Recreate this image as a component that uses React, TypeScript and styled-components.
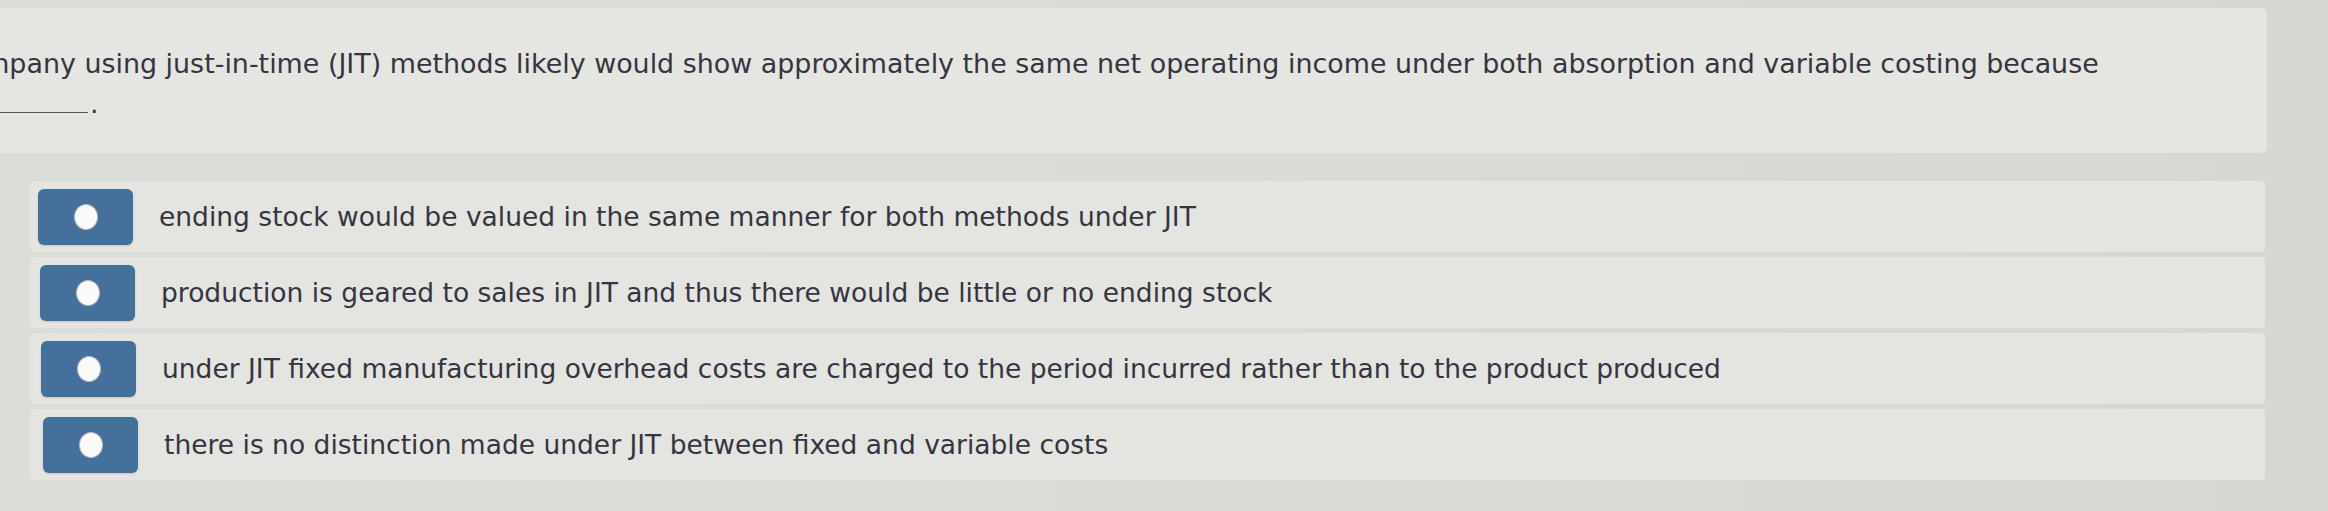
import React, { FC } from "react";
import styled, { createGlobalStyle } from "styled-components";

const GlobalStyle = createGlobalStyle`
  html, body {
    margin: 0;
    padding: 0;
    background: #d9d9d6;
  }
  body {
    font-family: "DejaVu Sans", Verdana, sans-serif;
    color: #353541;
  }
`;

const Page = styled.div`
  width: 2328px;
  height: 511px;
  overflow: hidden;
  padding-top: 8px;
  box-sizing: border-box;
  background: linear-gradient(90deg, #dcdcd9 0%, #dadad7 60%, #d6d6d3 100%);
`;

const QuestionPanel = styled.div`
  width: 2267px;
  height: 145px;
  background: #e5e5e2;
  border-radius: 0 6px 6px 0;
  box-sizing: border-box;
  padding-top: 36px;
  overflow: hidden;
`;

const QuestionText = styled.p`
  margin: 0 0 0 -75px;
  font-size: 26.9px;
  line-height: 40px;
`;

const Blank = styled.span`
  display: inline-block;
  width: 163px;
  border-bottom: 1.5px solid #555;
  vertical-align: baseline;
  margin-right: 2px;
`;

const OptionList = styled.div`
  display: flex;
  flex-direction: column;
  gap: 5px;
  margin: 28px 0 0 30px;
  width: 2235px;
`;

interface ShiftProps {
  shift: number;
}

const OptionRow = styled.div<ShiftProps>`
  display: flex;
  align-items: center;
  height: 71px;
  background: #e4e4e1;
  border-radius: 4px;
  padding-left: ${({ shift }) => 8 + shift}px;
  box-sizing: border-box;
`;

const RadioButton = styled.div`
  width: 95px;
  height: 56px;
  flex: none;
  border-radius: 6px;
  background: #44709b;
  display: flex;
  align-items: center;
  justify-content: center;
  box-shadow: 0 1px 2px rgba(0, 0, 0, 0.15);
`;

const Dot = styled.div`
  width: 22px;
  height: 24px;
  border-radius: 50%;
  background: #fafafa;
  border: 1.5px solid #b5b8bd;
`;

const OptionText = styled.span`
  margin-left: 26px;
  font-size: 26.5px;
`;

interface Choice {
  key: string;
  title: string;
  shift: number;
}

const choices: Array<Choice> = [
  { key: "a", shift: 0, title: "ending stock would be valued in the same manner for both methods under JIT" },
  {
    key: "b",
    shift: 2,
    title: "production is geared to sales in JIT and thus there would be little or no ending stock"
  },
  {
    key: "c",
    shift: 3,
    title:
      "under JIT fixed manufacturing overhead costs are charged to the period incurred rather than to the product produced"
  },
  { key: "d", shift: 5, title: "there is no distinction made under JIT between fixed and variable costs" }
];

const App: FC = () => {
  return (
    <Page>
      <GlobalStyle />
      <QuestionPanel>
        <QuestionText>
          A company using just-in-time (JIT) methods likely would show approximately the same net
          operating income under both absorption and variable costing because
          <br />
          <Blank />.
        </QuestionText>
      </QuestionPanel>
      <OptionList>
        {choices.map(c => (
          <OptionRow key={c.key} shift={c.shift}>
            <RadioButton>
              <Dot />
            </RadioButton>
            <OptionText>{c.title}</OptionText>
          </OptionRow>
        ))}
      </OptionList>
    </Page>
  );
};

export default App;
